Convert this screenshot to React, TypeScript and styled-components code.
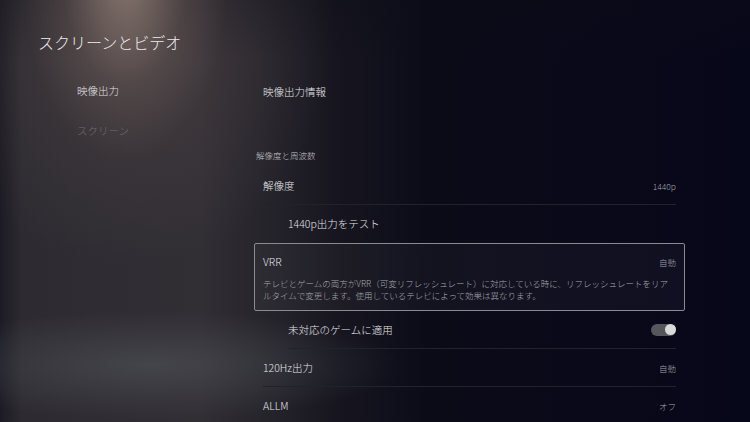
import React from 'react';
import styled, { createGlobalStyle } from 'styled-components';

const GlobalStyle = createGlobalStyle`
  html, body {
    margin: 0;
    padding: 0;
    background: #07071a;
  }
  body {
    font-family: "Noto Sans CJK JP", "Noto Sans", sans-serif;
    font-weight: 300;
  }
`;

const S = {
  Screen: styled.div`
    width: 750px;
    height: 422px;
    overflow: hidden;
    box-sizing: border-box;
    color: #e4e4e8;
    background:
      radial-gradient(ellipse 105px 190px at 125px -30px, rgba(205, 180, 160, 0.55), rgba(150, 126, 116, 0.2) 60%, rgba(0, 0, 0, 0) 100%),
      radial-gradient(ellipse 200px 230px at 130px 40px, rgba(120, 100, 96, 0.28), rgba(0, 0, 0, 0) 100%),
      radial-gradient(ellipse 250px 55px at 150px 365px, rgba(84, 87, 94, 0.55), rgba(0, 0, 0, 0) 100%),
      linear-gradient(to bottom, rgba(12, 12, 22, 0.3) 0px, rgba(0, 0, 0, 0) 60px),
      linear-gradient(to right, #1c1b23 0px, #2d2b31 22px, #312e34 200px, #27252c 260px, #16151f 340px, #0b0b18 430px, #07071a 100%);
  `,

  Header: styled.div`
    height: 72px;
    box-sizing: border-box;
    padding: 30px 0 0 38px;
    font-size: 16px;
    line-height: 24px;
    color: #ececf0;
  `,

  Body: styled.div`
    display: grid;
    grid-template-columns: 254px 431px;
  `,

  Sidebar: styled.nav`
    display: flex;
    flex-direction: column;
    gap: 22px;
    padding: 10px 0 0 77px;
  `,

  NavItem: styled.div<{ $active?: boolean }>`
    font-size: 10.5px;
    line-height: 18px;
    color: ${(p) => (p.$active ? '#e2e0e4' : '#6e6b73')};
  `,

  Content: styled.div`
    display: flex;
    flex-direction: column;
  `,

  InfoRow: styled.div`
    height: 38px;
    display: flex;
    align-items: center;
    padding-left: 9px;
    font-size: 10.5px;
  `,

  SectionLabel: styled.div`
    margin: 35px 0 2px 2px;
    font-size: 8.5px;
    line-height: 20px;
    color: #c9c9ce;
  `,

  Row: styled.div<{ $indent?: boolean; $divider?: boolean }>`
    height: 38px;
    box-sizing: border-box;
    margin: 0 9px 0 ${(p) => (p.$indent ? '34px' : '9px')};
    display: flex;
    align-items: center;
    justify-content: space-between;
    border-bottom: 1px solid ${(p) => (p.$divider ? '#22222c' : 'transparent')};
  `,

  Label: styled.span`
    font-size: 10.5px;
    color: #e4e4e8;
  `,

  Value: styled.span`
    font-size: 8.5px;
    color: #a3a3aa;
  `,

  Focus: styled.div`
    height: 68px;
    box-sizing: border-box;
    border: 1px solid #8a8a92;
    border-radius: 2px;
    background: rgba(255, 255, 255, 0.035);
    padding: 10px 8px 0 8px;
    display: flex;
    flex-direction: column;
    gap: 7px;
  `,

  FocusHead: styled.div`
    display: flex;
    justify-content: space-between;
    align-items: center;
    line-height: 16px;
  `,

  Desc: styled.p`
    margin: 0;
    font-size: 8.5px;
    line-height: 12px;
    color: #a6a6ae;
  `,

  Toggle: styled.div<{ $on?: boolean }>`
    width: 25px;
    height: 12px;
    border-radius: 6px;
    background: #56565d;
    display: flex;
    align-items: center;
    justify-content: ${(p) => (p.$on ? 'flex-end' : 'flex-start')};
  `,

  Knob: styled.div`
    width: 11px;
    height: 11px;
    border-radius: 50%;
    background: #dadada;
  `,
};

const App: React.FC = () => {
  return (
    <S.Screen>
      <GlobalStyle />
      <S.Header>スクリーンとビデオ</S.Header>
      <S.Body>
        <S.Sidebar>
          <S.NavItem $active>映像出力</S.NavItem>
          <S.NavItem>スクリーン</S.NavItem>
        </S.Sidebar>
        <S.Content>
          <S.InfoRow>映像出力情報</S.InfoRow>
          <S.SectionLabel>解像度と周波数</S.SectionLabel>
          <S.Row $divider>
            <S.Label>解像度</S.Label>
            <S.Value>1440p</S.Value>
          </S.Row>
          <S.Row $indent>
            <S.Label>1440p出力をテスト</S.Label>
          </S.Row>
          <S.Focus>
            <S.FocusHead>
              <S.Label>VRR</S.Label>
              <S.Value>自動</S.Value>
            </S.FocusHead>
            <S.Desc>
              テレビとゲームの両方がVRR（可変リフレッシュレート）に対応している時に、リフレッシュレートをリアルタイムで変更します。使用しているテレビによって効果は異なります。
            </S.Desc>
          </S.Focus>
          <S.Row $indent $divider>
            <S.Label>未対応のゲームに適用</S.Label>
            <S.Toggle $on>
              <S.Knob />
            </S.Toggle>
          </S.Row>
          <S.Row $divider>
            <S.Label>120Hz出力</S.Label>
            <S.Value>自動</S.Value>
          </S.Row>
          <S.Row>
            <S.Label>ALLM</S.Label>
            <S.Value>オフ</S.Value>
          </S.Row>
        </S.Content>
      </S.Body>
    </S.Screen>
  );
};

export default App;
